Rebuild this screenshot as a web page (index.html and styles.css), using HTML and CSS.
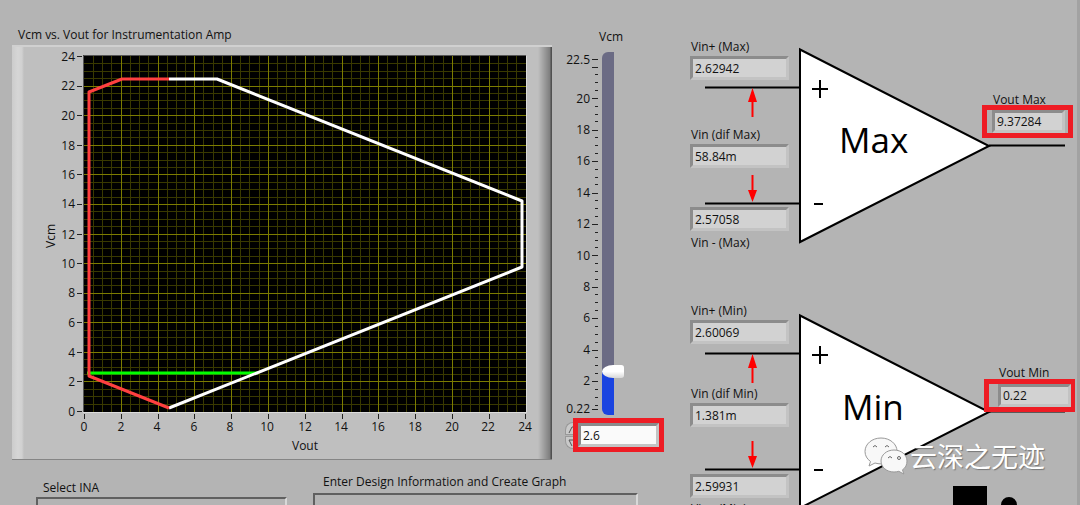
FILE: index.html
```html
<!DOCTYPE html>
<html lang="en">
<head>
<meta charset="utf-8">
<title>Vcm vs. Vout for Instrumentation Amp</title>
<link rel="stylesheet" href="styles.css">
</head>
<body>
<main class="panel">
  <section class="left">
    <div class="top">
      <figure class="graph">
        <figcaption class="graph-title">Vcm vs. Vout for Instrumentation Amp</figcaption>
        <div class="graph-frame">
          <svg class="graph-svg" viewBox="0 2 540 412">
            <rect x="71" y="10" width="443" height="357" class="plot"/>
            <path class="minor" d="M81.5 11V367M90.5 11V367M99.5 11V367M118.5 11V367M127.5 11V367M136.5 11V367M155.5 11V367M164.5 11V367M173.5 11V367M191.5 11V367M201.5 11V367M210.5 11V367M228.5 11V367M237.5 11V367M247.5 11V367M265.5 11V367M274.5 11V367M283.5 11V367M302.5 11V367M311.5 11V367M320.5 11V367M339.5 11V367M348.5 11V367M357.5 11V367M375.5 11V367M385.5 11V367M394.5 11V367M412.5 11V367M421.5 11V367M431.5 11V367M449.5 11V367M458.5 11V367M467.5 11V367M486.5 11V367M495.5 11V367M504.5 11V367"/>
            <path class="minor" d="M72 18.5H514M72 26.5H514M72 33.5H514M72 48.5H514M72 55.5H514M72 63.5H514M72 78.5H514M72 85.5H514M72 92.5H514M72 107.5H514M72 115.5H514M72 122.5H514M72 137.5H514M72 144.5H514M72 152.5H514M72 166.5H514M72 174.5H514M72 181.5H514M72 196.5H514M72 203.5H514M72 211.5H514M72 226.5H514M72 233.5H514M72 240.5H514M72 255.5H514M72 263.5H514M72 270.5H514M72 285.5H514M72 292.5H514M72 300.5H514M72 314.5H514M72 322.5H514M72 329.5H514M72 344.5H514M72 351.5H514M72 359.5H514"/>
            <path class="major" d="M109.5 11V367M146.5 11V367M182.5 11V367M219.5 11V367M256.5 11V367M293.5 11V367M330.5 11V367M366.5 11V367M403.5 11V367M440.5 11V367M477.5 11V367M72 41.5H514M72 70.5H514M72 100.5H514M72 129.5H514M72 159.5H514M72 189.5H514M72 218.5H514M72 248.5H514M72 277.5H514M72 307.5H514M72 336.5H514"/>
            <path class="shade" d="M71.5 367V10.5H514"/>
            <path class="shine" d="M71 367.5H514.5V11"/>
            <path class="curve green" d="M75 328H246"/>
            <path class="curve white" d="M157 34H205L510 156V222L157 363"/>
            <path class="curve red" d="M157 363L77 331V47L110 34H157"/>
            <path class="tick" d="M65 11.5h5M65 41.5h5M65 70.5h5M65 100.5h5M65 129.5h5M65 159.5h5M65 189.5h5M65 218.5h5M65 248.5h5M65 277.5h5M65 307.5h5M65 336.5h5M65 366.5h5M72.5 369v5M109.5 369v5M146.5 369v5M182.5 369v5M219.5 369v5M256.5 369v5M293.5 369v5M330.5 369v5M366.5 369v5M403.5 369v5M440.5 369v5M477.5 369v5M513.5 369v5"/>
            <g class="end">
              <text x="63" y="16">24</text><text x="63" y="45">22</text><text x="63" y="75">20</text><text x="63" y="105">18</text><text x="63" y="134">16</text><text x="63" y="163">14</text><text x="63" y="194">12</text><text x="63" y="223">10</text><text x="63" y="252">8</text><text x="63" y="282">6</text><text x="63" y="312">4</text><text x="63" y="341">2</text><text x="63" y="371">0</text>
            </g>
            <g class="mid">
              <text x="72" y="386">0</text><text x="109" y="386">2</text><text x="145" y="386">4</text><text x="182" y="386">6</text><text x="218" y="386">8</text><text x="255" y="386">10</text><text x="293" y="386">12</text><text x="329" y="386">14</text><text x="366" y="386">16</text><text x="403" y="386">18</text><text x="440" y="386">20</text><text x="476" y="386">22</text><text x="513" y="386">24</text>
              <text x="293" y="405">Vout</text>
              <text transform="translate(43 191) rotate(-90)">Vcm</text>
            </g>
          </svg>
        </div>
      </figure>
      <section class="vcm">
        <label class="vcm-title" for="vcm">Vcm</label>
        <div class="vcm-body">
          <svg class="scale" viewBox="-6 0 44 363" width="44" height="363">
            <path class="tick" d="M28 7.500h6M28 15.500h6M28 46.500h6M28 78.500h6M28 109.500h6M28 141.500h6M28 172.500h6M28 203.500h6M28 235.500h6M28 266.500h6M28 298.500h6M28 329.500h6M28 357.500h6"/>
            <path class="tick" d="M31 22.500h3M31 30.500h3M31 38.500h3M31 54.500h3M31 62.500h3M31 69.500h3M31 85.500h3M31 93.500h3M31 101.500h3M31 117.500h3M31 125.500h3M31 132.500h3M31 148.500h3M31 156.500h3M31 164.500h3M31 180.500h3M31 188.500h3M31 195.500h3M31 211.500h3M31 219.500h3M31 227.500h3M31 242.500h3M31 250.500h3M31 258.500h3M31 274.500h3M31 282.500h3M31 290.500h3M31 305.500h3M31 313.500h3M31 321.500h3M31 337.500h3M31 345.500h3M31 353.500h3"/>
            <g class="end">
              <text x="26" y="12">22.5</text><text x="26" y="51">20</text><text x="26" y="82">18</text><text x="26" y="113">16</text><text x="26" y="145">14</text><text x="26" y="176">12</text><text x="26" y="208">10</text><text x="26" y="239">8</text><text x="26" y="270">6</text><text x="26" y="302">4</text><text x="26" y="333">2</text><text x="26" y="361">0.22</text>
            </g>
          </svg>
          <input class="slider" id="vcm" type="range" min="0.22" max="22.5" step="0.01" value="2.6">
        </div>
        <div class="numeric">
          <div class="spin">
            <button class="spin-up" type="button" aria-label="Increase Vcm"><svg viewBox="0 0 8 12" width="8" height="12"><path d="M3 10L6 4L8 4"/></svg></button>
            <button class="spin-down" type="button" aria-label="Decrease Vcm"><svg viewBox="0 0 8 12" width="8" height="12"><path d="M8 3H3L6 9"/></svg></button>
          </div>
          <div class="marked"><input class="entry" type="text" value="2.6" aria-label="Vcm value"></div>
        </div>
      </section>
    </div>
    <div class="bottom">
      <section class="ina"><h2 class="box-title">Select INA</h2><div class="box"></div></section>
      <section class="design"><h2 class="box-title">Enter Design Information and Create Graph</h2><div class="box"></div></section>
    </div>
  </section>

  <section class="right">
    <div class="amp max">
      <svg class="amp-svg" viewBox="0 0 395 266" width="395" height="266">
        <defs>
          <g id="amp">
            <path class="tri" d="M120 49.500L309 146L120 242Z"/>
            <path class="wire" d="M25 87.500H120M25 203.500H120M309 145.500H385"/>
            <path class="arrow-line" d="M72.500 98V117M72.500 175V192"/>
            <path class="arrow-head" d="M72.500 88L77 102H68ZM72.500 202L77 190H68Z"/>
            <path class="sign" d="M132 89H148M140 80V98M134 204H143"/>
          </g>
        </defs>
        <use href="#amp"/>
        <text class="amp-name" x="159" y="153">Max</text>
      </svg>
      <label class="label plus" for="pmax">Vin+ (Max)</label><input class="field plus-field" id="pmax" readonly value="2.62942">
      <label class="label dif" for="dmax">Vin (dif Max)</label><input class="field dif-field" id="dmax" readonly value="58.84m">
      <input class="field minus-field" id="mmax" readonly value="2.57058"><label class="label minus" for="mmax">Vin - (Max)</label>
      <label class="label out" for="omax">Vout Max</label><div class="marked out-box"><input class="field out-field" id="omax" readonly value="9.37284"></div>
    </div>
    <div class="amp min">
      <svg class="amp-svg" viewBox="0 0 395 266" width="395" height="266">
        <use href="#amp"/>
        <text class="amp-name" x="162" y="154">Min</text>
        <path d="M273 220H307V266H273ZM321 239a8 8 0 0 1 16 0z"/>
      </svg>
      <label class="label plus" for="pmin">Vin+ (Min)</label><input class="field plus-field" id="pmin" readonly value="2.60069">
      <label class="label dif" for="dmin">Vin (dif Min)</label><input class="field dif-field" id="dmin" readonly value="1.381m">
      <input class="field minus-field" id="mmin" readonly value="2.59931"><label class="label minus" for="mmin">Vin - (Min)</label>
      <label class="label out" for="omin">Vout Min</label><div class="marked out-box"><input class="field out-field" id="omin" readonly value="0.22"></div>
      <div class="watermark">
        <svg viewBox="0 0 46 40" width="46" height="40">
          <path class="bubble" d="M17 2C8 2 1 8 1 15.500c0 4 2 7.500 5.500 10L5 30l6-3c2 .6 4 .9 6 .9c9 0 16-6 16-12.900S26 2 17 2z"/>
          <path class="face" d="M9 11q2-3 4 0M21 11q2-3 4 0"/>
          <path class="bubble" d="M30 14c-7.500 0-13 5-13 11s5.500 11 13 11c1.700 0 3.300-.3 4.800-.7l5 2.700l-1.300-4.200C41.500 32 43 28.700 43 25c0-6-5.500-11-13-11z"/>
          <path class="face" d="M24 22q2-3 4 0"/><circle class="face" cx="35" cy="22" r="1.500"/>
        </svg>
        <span lang="zh">云深之无迹</span>
      </div>
    </div>
  </section>
</main>
</body>
</html>
```
FILE: styles.css
```css
* { box-sizing: border-box; }
body {
  margin: 0;
  overflow: hidden;
  background: #b4b4b4;
  color: #111;
  font: 12px/16px "Open Sans", "Noto Sans", sans-serif;
}
input, button { font: inherit; color: inherit; margin: 0; }
.panel { display: flex; height: 100vh; overflow: hidden; }

.left { flex: 1; min-width: 0; padding: 27px 0 0 12px; }
.top { display: flex; align-items: flex-start; }
.graph { flex: 1; min-width: 0; margin: 0; }
.graph-title { padding-left: 6px; height: 18px; }
.graph-frame {
  border-top: 2px solid #d0d0d0;
  border-bottom: 1px solid #858585;
  background: linear-gradient(90deg, #cccccc, #d6d6d6 6px, #d0d0d0 10px, #bfbfbf 12px, #bfbfbf calc(100% - 14px), #7d7d7d calc(100% - 2px), #505050 calc(100% - 1px));
}
.graph-svg { display: block; width: 100%; }
.graph-svg text, .scale text { fill: #111; font-size: 12px; }
.end { text-anchor: end; }
.mid { text-anchor: middle; }
.plot { fill: #000; }
.minor { stroke: #393900; }
.major { stroke: #7c7c00; }
.shade, .shine { fill: none; stroke: #555; }
.shine { stroke: #dcdcdc; }
.tick { stroke: #222; }
.curve { fill: none; stroke-width: 3; stroke-linejoin: round; }
.red { stroke: #ff4040; }
.white { stroke: #fff; }
.green { stroke: #0f0; }

.vcm { flex: none; width: 128px; padding: 2px 0 0 6px; }
.vcm-title { display: block; height: 23px; padding-left: 41px; }
.vcm-body { display: flex; }
.slider {
  appearance: none;
  writing-mode: vertical-lr;
  direction: rtl;
  width: 22px;
  height: 363px;
  background: linear-gradient(#6b6b84 319px, #1a44e0 319px) 0 0 / 12px 100% no-repeat;
  border-radius: 6px 0 0 6px;
}
.slider::-webkit-slider-runnable-track { width: 22px; height: 100%; background: none; }
.slider::-webkit-slider-thumb {
  appearance: none;
  width: 22px;
  height: 13px;
  border-radius: 12px 3px 3px 12px / 7px 3px 3px 7px;
  background: linear-gradient(#fff 50%, #d8d8d8);
}
.numeric { display: flex; align-items: center; padding: 3px 0 0 6px; }
.spin { display: flex; flex-direction: column; gap: 1px; width: 9px; padding-left: 1px; }
.spin button { display: block; width: 8px; height: 13px; padding: 0; border: 1px solid #999; border-right: 0; background: #c9c9c9; }
.spin-up { border-radius: 8px 0 0 0; }
.spin-down { border-radius: 0 0 0 8px; }
.spin svg { display: block; fill: none; stroke: #555; }
.marked { border: 5px solid #ee1c24; }
.entry {
  display: block;
  width: 81px;
  height: 24px;
  padding: 0 2px;
  border: 3px solid #8b8b8b;
  border-right-color: #c4c4c4;
  border-bottom-color: #c4c4c4;
  background: #fafafa;
}

.bottom { display: flex; align-items: flex-start; gap: 26px; padding: 13px 42px 0 24px; }
.ina { flex: 251; padding-top: 6px; }
.design { flex: 325; }
.box-title { margin: 0; padding-left: 7px; font-size: 12px; font-weight: 400; line-height: 18px; }
.design .box-title { padding: 0 0 2px 10px; }
.box { height: 60px; border: 2px solid #606060; border-right-color: #d8d8d8; }

.right { flex: none; width: 400px; border-right: 3px solid #a2a2a2; }
.amp { position: relative; height: 266px; }
.amp-svg { display: block; }
.tri { fill: #fff; stroke: #000; stroke-width: 2; }
.wire, .sign { stroke: #000; stroke-width: 2; }
.arrow-line { stroke: #f00; stroke-width: 2; }
.arrow-head { fill: #f00; }
.amp-name { font-size: 35px; }
.label, .field, .out-box { position: absolute; left: 11px; white-space: nowrap; }
.field {
  left: 10px;
  width: 99px;
  height: 24px;
  padding: 0 2px;
  border: 3px solid #8c8c8c;
  border-right-color: #c3c3c3;
  border-bottom-color: #c3c3c3;
  background: #d2d2d2;
}
.plus { top: 39px; }
.plus-field { top: 56px; }
.dif { top: 127px; }
.dif-field { top: 144px; }
.minus-field { top: 207px; }
.minus { top: 235px; }
.out { top: 92px; left: 313px; }
.out-box { top: 105px; left: 302px; width: 91px; height: 33px; background: #b0b0b0; padding-left: 5px; }
.out-field { position: static; display: block; width: 73px; height: 23px; }
.min .plus { top: 37px; }
.min .plus-field { top: 54px; }
.min .dif { top: 120px; }
.min .dif-field { top: 137px; }
.min .minus-field { top: 208px; }
.min .out { top: 99px; left: 319px; }
.min .out-box { top: 113px; left: 304px; padding-left: 9px; }
.watermark {
  position: absolute;
  left: 184px;
  top: 170px;
  display: flex;
  align-items: center;
  color: #fff;
  font: 27px/40px "Noto Sans CJK SC", sans-serif;
  text-shadow: 1px 1px 1px #777;
}
.bubble { fill: #f8f8f8; stroke: #999; }
.face { fill: none; stroke: #666; }
```
